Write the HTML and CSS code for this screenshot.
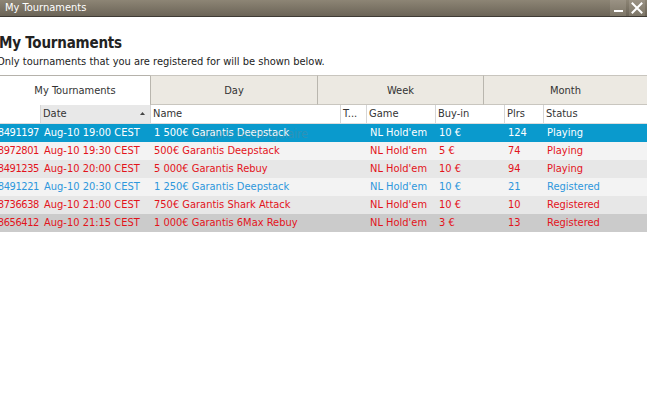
FILE: index.html
```html
<!DOCTYPE html>
<html>
<head>
<meta charset="utf-8">
<link rel="stylesheet" href="styles.css">
</head>
<body>
<div class="window">
  <div class="titlebar">
    <span class="title">My Tournaments</span>
    <div class="controls">
      <span class="btn min"><span class="bar"></span></span>
      <span class="btn close">
        <svg width="12" height="12" viewBox="0 0 12 12"><path d="M1.5 1.5 L10.5 10.5 M10.5 1.5 L1.5 10.5" stroke="#fff" stroke-width="2" stroke-linecap="square"/></svg>
      </span>
    </div>
  </div>
  <div class="content">
    <h1 class="heading">My Tournaments</h1>
    <p class="subtitle">Only tournaments that you are registered for will be shown below.</p>
    <div class="tabs">
      <div class="tab active">My Tournaments</div>
      <div class="tab">Day</div>
      <div class="tab">Week</div>
      <div class="tab last">Month</div>
    </div>
    <div class="table">
      <div class="row head">
        <div class="cell id"></div>
        <div class="cell sorted">Date<svg class="arrow" width="5" height="3" viewBox="0 0 5 3"><path d="M0 3 L2.5 0 L5 3 Z" fill="#444"/></svg></div>
        <div class="cell">Name</div>
        <div class="cell">T...</div>
        <div class="cell">Game</div>
        <div class="cell">Buy-in</div>
        <div class="cell">Plrs</div>
        <div class="cell last">Status</div>
      </div>
      <div class="row sel">
        <div class="cell id"><span>8491197</span></div>
        <div class="cell">Aug-10 19:00 CEST</div>
        <div class="cell">1 500€ Garantis Deepstack</div>
        <div class="cell"></div>
        <div class="cell">NL Hold'em</div>
        <div class="cell">10 €</div>
        <div class="cell">124</div>
        <div class="cell">Playing</div>
      </div>
      <div class="row red light">
        <div class="cell id"><span>8972801</span></div>
        <div class="cell">Aug-10 19:30 CEST</div>
        <div class="cell">500€ Garantis Deepstack</div>
        <div class="cell"></div>
        <div class="cell">NL Hold'em</div>
        <div class="cell">5 €</div>
        <div class="cell">74</div>
        <div class="cell">Playing</div>
      </div>
      <div class="row red dark">
        <div class="cell id"><span>8491235</span></div>
        <div class="cell">Aug-10 20:00 CEST</div>
        <div class="cell">5 000€ Garantis Rebuy</div>
        <div class="cell"></div>
        <div class="cell">NL Hold'em</div>
        <div class="cell">10 €</div>
        <div class="cell">94</div>
        <div class="cell">Playing</div>
      </div>
      <div class="row blue light">
        <div class="cell id"><span>8491221</span></div>
        <div class="cell">Aug-10 20:30 CEST</div>
        <div class="cell">1 250€ Garantis Deepstack</div>
        <div class="cell"></div>
        <div class="cell">NL Hold'em</div>
        <div class="cell">10 €</div>
        <div class="cell">21</div>
        <div class="cell">Registered</div>
      </div>
      <div class="row red dark">
        <div class="cell id"><span>8736638</span></div>
        <div class="cell">Aug-10 21:00 CEST</div>
        <div class="cell">750€ Garantis Shark Attack</div>
        <div class="cell"></div>
        <div class="cell">NL Hold'em</div>
        <div class="cell">10 €</div>
        <div class="cell">10</div>
        <div class="cell">Registered</div>
      </div>
      <div class="row red hover">
        <div class="cell id"><span>8656412</span></div>
        <div class="cell">Aug-10 21:15 CEST</div>
        <div class="cell">1 000€ Garantis 6Max Rebuy</div>
        <div class="cell"></div>
        <div class="cell">NL Hold'em</div>
        <div class="cell">3 €</div>
        <div class="cell">13</div>
        <div class="cell">Registered</div>
      </div>
      <span class="ghost">Capture rectangulaire</span>
    </div>
  </div>
</div>
</body>
</html>
```

FILE: styles.css
```css
html, body {
  margin: 0;
  padding: 0;
  background: #ffffff;
}
body {
  font-family: "DejaVu Sans Condensed", "DejaVu Sans", sans-serif;
  font-size: 11px;
  width: 647px;
  height: 407px;
  overflow: hidden;
}
.window {
  display: flex;
  flex-direction: column;
}
.titlebar {
  height: 16px;
  background: linear-gradient(#8d8575, #6b6457);
  border-bottom: 1px solid #3f3b35;
  display: flex;
  align-items: center;
  justify-content: space-between;
}
.title {
  color: #ffffff;
  font-size: 11px;
  padding-left: 5px;
  line-height: 16px;
}
.controls {
  display: flex;
  gap: 3px;
  padding-right: 2px;
  align-self: stretch;
}
.btn {
  width: 16px;
  height: 16px;
  background: linear-gradient(#9a9284, #7d7667);
  display: flex;
  align-items: center;
  justify-content: center;
}
.btn.min {
  align-items: flex-end;
}
.bar {
  width: 9px;
  height: 2px;
  background: #ffffff;
  margin-bottom: 4px;
}
.content {
  display: flex;
  flex-direction: column;
  position: relative;
}
.heading {
  margin: 17px 0 0 -1px;
  font-size: 15px;
  font-weight: bold;
  color: #222222;
  line-height: 18px;
  letter-spacing: -0.2px;
}
.subtitle {
  margin: 3px 0 0 -3px;
  font-size: 11px;
  color: #222222;
  line-height: 13px;
}
.tabs {
  margin-top: 7px;
  display: grid;
  grid-template-columns: 150px 167px 166px 164px;
  height: 30px;
}
.tab {
  background: #ece9e2;
  border-top: 1px solid #c8c5be;
  border-left: 1px solid #b9b6ae;
  border-bottom: 1px solid #c9c6bf;
  color: #333333;
  display: flex;
  align-items: center;
  justify-content: center;
  box-sizing: border-box;
}
.tab.active {
  background: #ffffff;
  border-left: none;
  border-top: 1px solid #b5b2ab;
  border-bottom: 1px solid #ffffff;
}
.table {
  display: flex;
  flex-direction: column;
  position: relative;
}
.row {
  display: grid;
  grid-template-columns: 40px 110px 190px 26px 69px 69px 39px 104px;
  height: 18px;
  align-items: stretch;
}
.cell {
  padding-left: 4px;
  line-height: 18px;
  white-space: nowrap;
  overflow: hidden;
}
.row.head {
  background: #ffffff;
  color: #333333;
  border-bottom: 1px solid #dddddd;
}
.row.head .cell {
  border-left: 1px solid #d6d6d6;
  padding-left: 2px;
  position: relative;
}
.row.head .cell.id {
  border-left: none;
}
.row.head .cell.sorted {
  background: #e8e8e8;
}
.arrow {
  position: absolute;
  right: 5px;
  top: 7px;
}
.cell.id {
  display: flex;
  justify-content: flex-end;
  padding-left: 0;
  padding-right: 1px;
  letter-spacing: -0.4px;
}
.row.sel {
  background: #0a9acd;
  color: #ffffff;
}
.row.light {
  background: #f3f3f3;
}
.row.dark {
  background: #e7e7e7;
}
.row.hover {
  background: #cbcbcb;
}
.row.red {
  color: #e3131b;
}
.row.blue {
  color: #2e97dc;
}
.ghost {
  position: absolute;
  left: 190px;
  top: 22px;
  font-size: 12px;
  color: rgba(120, 130, 140, 0.35);
  pointer-events: none;
}
```
